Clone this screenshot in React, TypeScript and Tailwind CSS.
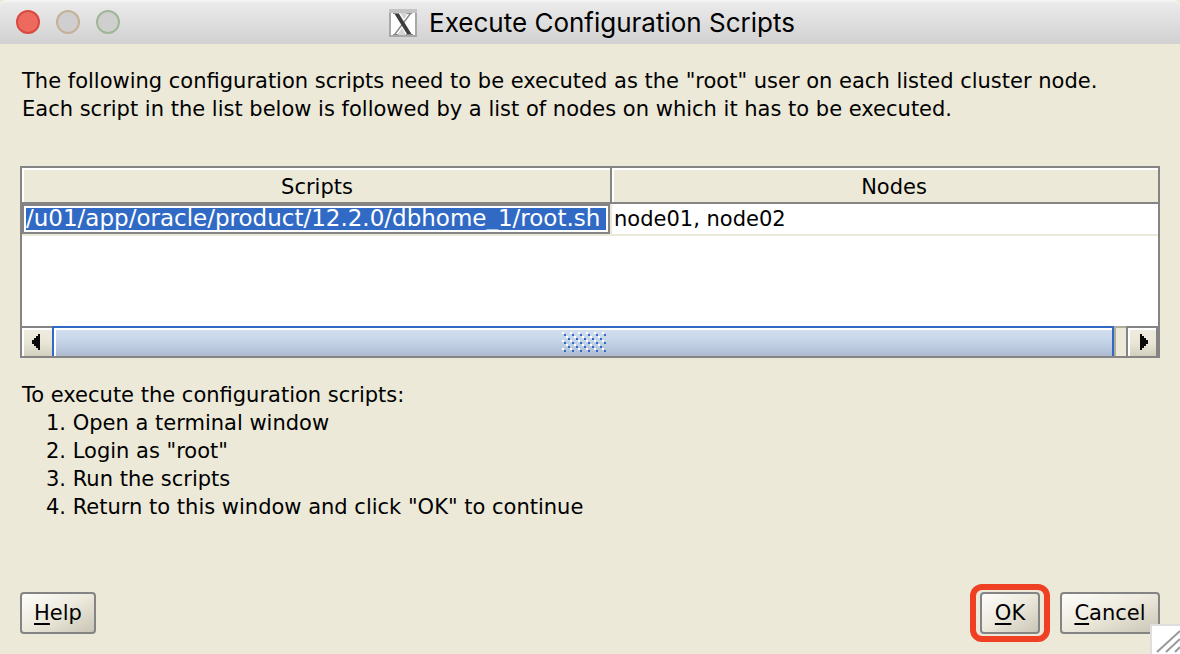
import React from "react";

const steps = [
  "Open a terminal window",
  'Login as "root"',
  "Run the scripts",
  'Return to this window and click "OK" to continue',
];

function TitleBar() {
  return (
    <header className="relative flex h-11 shrink-0 items-center justify-center rounded-t-md border-t-2 border-[#f4f4f4] bg-linear-to-b from-[#ebebeb] to-[#d1d1d1] pb-px pl-1">
      <div className="absolute left-4 top-2 flex gap-4">
        <button type="button" aria-label="Close" className="size-6 rounded-full border-2 border-[#d9493f] bg-[#ee6a5f]" />
        <button type="button" aria-label="Minimize" className="size-6 rounded-full border-2 border-[#c6b198] bg-[#cfcfcf]" />
        <button type="button" aria-label="Zoom" className="size-6 rounded-full border-2 border-[#9fb795] bg-[#cfcfcf]" />
      </div>
      <div className="flex items-center gap-3">
        <svg viewBox="0 0 28 28" className="size-7" aria-hidden="true">
          <rect x="1" y="1" width="26" height="26" fill="#fff" stroke="#a8a8a8" strokeWidth="2" />
          <rect x="0" y="0" width="28" height="4" fill="#c4c4c4" />
          <path d="M11 4h8l-4 6zM8 26l5-7 4 7z" fill="#d4d4d4" />
          <path d="M21.500 4.500 6 25" stroke="#8b8b8b" strokeWidth="1.500" fill="none" />
          <path d="M5 4h4.500l13 21h-4.500z" fill="#3d3d3d" />
          <path d="M4 4.500h6M17 25.500h7M18 4.500h5M4 25.500h5" stroke="#888" strokeWidth="1" />
        </svg>
        <h1 className="font-[Inter,sans-serif] text-[26px] leading-8">Execute Configuration Scripts</h1>
      </div>
    </header>
  );
}

function ScrollBar() {
  return (
    <div className="flex h-[30px]">
      <button
        type="button"
        aria-label="Scroll left"
        className="flex w-[30px] shrink-0 border-t-2 border-[#848484]"
      >
        <span className="flex size-full items-center justify-center border-l-2 border-t-2 border-white bg-linear-to-b from-[#eeecdf] via-[#e9e6d7] to-[#d2cfbf] pb-0.5 pr-1">
          <svg viewBox="0 0 8 16" className="h-4 w-2" aria-hidden="true">
            <path d="M8 0v16H6v-2H4v-2H2v-2H0V6h2V4h2V2h2V0z" fill="#0a0a0a" />
          </svg>
        </span>
      </button>
      <div role="scrollbar" aria-label="Scripts table" aria-controls="scripts" aria-orientation="horizontal" aria-valuenow={0} className="flex grow">
        <div className="flex grow border-x-2 border-t-2 border-[#316ac5]">
          <div className="flex grow items-center justify-center border-l-2 border-t-2 border-white bg-linear-to-b from-[#d3dff0] via-[#c2d2e6] to-[#adbad0] pb-0.5">
            <svg viewBox="0 0 44 20" className="h-5 w-11" aria-hidden="true">
              <defs>
                <pattern id="grip" width="8" height="8" patternUnits="userSpaceOnUse">
                  <path d="M0 0h2v2H0zM4 4h2v2H4z" fill="#fff" />
                  <path d="M2 2h2v2H2zM6 6h2v2H6z" fill="#316ac5" />
                </pattern>
              </defs>
              <rect width="44" height="20" fill="url(#grip)" />
            </svg>
          </div>
        </div>
        <div className="w-3 border-l-2 border-t-2 border-[#b0ad99]" />
      </div>
      <button
        type="button"
        aria-label="Scroll right"
        className="flex w-8 shrink-0 border-x-2 border-t-2 border-[#848484]"
      >
        <span className="flex size-full items-center justify-center border-l-2 border-t-2 border-white bg-linear-to-b from-[#eeecdf] via-[#e9e6d7] to-[#d2cfbf] pb-0.5 pl-0.5">
          <svg viewBox="0 0 8 16" className="h-4 w-2" aria-hidden="true">
            <path d="M0 0v16h2v-2h2v-2h2v-2h2V6H6V4H4V2H2V0z" fill="#0a0a0a" />
          </svg>
        </span>
      </button>
    </div>
  );
}

function DialogButton({ label, className }: { label: string; className: string }) {
  return (
    <button
      type="button"
      className={`h-[42px] rounded-[4px] border-2 border-[#848484] bg-linear-to-br from-[#fdfdfa] via-[#ece9dc] to-[#c9c6b6] text-center ${className}`}
    >
      <span className="underline decoration-2 underline-offset-3">{label[0]}</span>
      {label.slice(1)}
    </button>
  );
}

export default function App() {
  return (
    <div className="relative flex min-h-screen flex-col bg-[#ece9d8] font-['DejaVu_Sans',sans-serif] text-[21px] leading-7 text-black">
      <TitleBar />
      <main className="flex grow flex-col px-5 pb-3 pt-[23px]">
        <p className="pl-0.5">
          The following configuration scripts need to be executed as the "root" user on each listed cluster node.
          <br />
          Each script in the list below is followed by a list of nodes on which it has to be executed.
        </p>

        <div className="mt-[43px] border-2 border-[#848484]">
          <div className="min-h-[158px] bg-white">
            <table id="scripts" className="w-full table-fixed border-separate border-spacing-0">
              <thead>
                <tr className="h-9">
                  <th className="w-[590px] border-b-2 border-r-2 border-[#848484] p-0 font-normal">
                    <div className="h-[34px] border-l-2 border-t-2 border-white bg-[#ece9d8] pt-px leading-8">Scripts</div>
                  </th>
                  <th className="border-b-2 border-[#848484] p-0 font-normal">
                    <div className="h-[34px] border-l-2 border-t-2 border-white bg-[#ece9d8] pl-4 pt-px leading-8">Nodes</div>
                  </th>
                </tr>
              </thead>
              <tbody>
                <tr className="h-8">
                  <td className="border-b-2 border-r-2 border-[#ece9d8] p-0">
                    <div className="flex h-[30px] border-2 border-[#848484] p-0.5">
                      <input
                        readOnly
                        aria-label="Script path"
                        value="/u01/app/oracle/product/12.2.0/dbhome_1/root.sh"
                        className="h-[22px] w-full bg-[#316ac5] pb-0.5 text-[23px] text-white outline-none"
                      />
                    </div>
                  </td>
                  <td className="border-b-2 border-[#ece9d8] py-0 pl-0.5 pr-0">node01, node02</td>
                </tr>
              </tbody>
            </table>
          </div>
          <ScrollBar />
        </div>

        <section className="mt-[23px] pl-0.5">
          <p>To execute the configuration scripts:</p>
          <ol className="list-inside list-decimal pl-6">
            {steps.map((step) => (
              <li key={step}>{step}</li>
            ))}
          </ol>
        </section>

        <footer className="mt-auto flex items-center">
          <DialogButton label="Help" className="w-[76px]" />
          <div className="ml-auto mr-2.5 rounded-xl border-6 border-[#f04023] px-1 py-0.5">
            <DialogButton label="OK" className="block w-[60px]" />
          </div>
          <DialogButton label="Cancel" className="w-[100px]" />
        </footer>
      </main>
      <div className="absolute bottom-0 right-0 size-[30px] border-l-2 border-t-2 border-[#dedede] bg-white">
        <svg viewBox="0 0 28 28" className="size-7" aria-hidden="true">
          <path d="M5 26 28 5M14 26 28 13M23 26l5-5" stroke="#999" strokeWidth="2" fill="none" />
        </svg>
      </div>
    </div>
  );
}
